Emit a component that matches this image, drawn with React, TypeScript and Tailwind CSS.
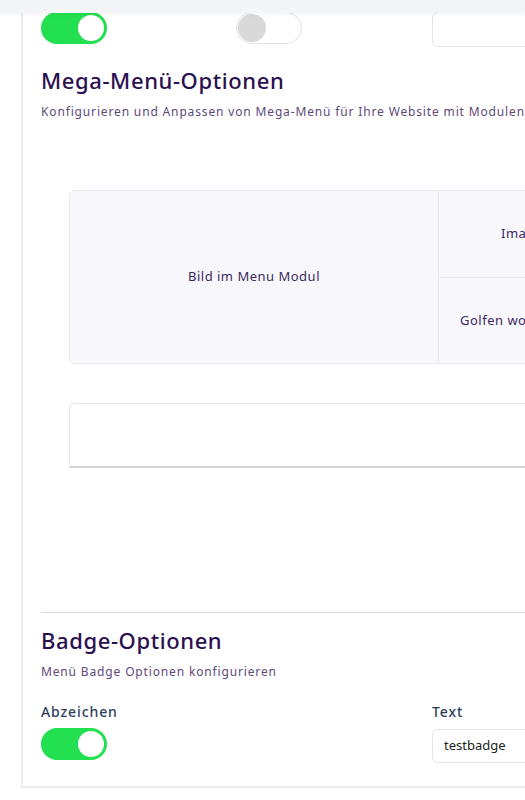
import React from 'react';

const Toggle = ({ on }: { on: boolean }) =>
  on ? (
    <div className="w-[66px] h-[32px] rounded-full bg-[#22e04f] flex items-center justify-end pr-[3px]">
      <div className="w-[26px] h-[26px] rounded-full bg-white" />
    </div>
  ) : (
    <div className="w-[66px] h-[32px] rounded-full bg-white border border-[#e2e2e2] flex items-center pl-[1px]">
      <div className="w-[28px] h-[28px] rounded-full bg-[#d9d9d9]" />
    </div>
  );

const SectionHead = ({ title, sub }: { title: string; sub: string }) => (
  <div>
    <h2 className="text-[22px] leading-[30px] font-medium text-[#2a1050] tracking-[0.6px]">{title}</h2>
    <p className="mt-[8px] text-[12px] leading-[18px] text-[#5c4a7c] tracking-[0.85px] whitespace-nowrap">{sub}</p>
  </div>
);

export default function App() {
  return (
    <div className="relative h-[800px] w-[525px] overflow-hidden bg-white" style={{ fontFamily: '"Noto Sans", Lato, sans-serif' }}>
      <div className="absolute top-0 left-0 right-0 h-[13px] bg-[#f3f5f9] shadow-[0_2px_4px_rgba(0,0,0,0.04)] z-10" />

      <div className="ml-[21px] w-[720px] border-l-2 border-b-2 border-[#ececee] pl-[18px] pr-4 pb-[23px]">
        <div className="grid grid-cols-[195px_196px_1fr] pt-[12px]">
          <Toggle on />
          <Toggle on={false} />
          <div className="h-[35px] rounded-md border border-[#e4e4e4] bg-white" />
        </div>

        <div className="mt-[18px]">
          <SectionHead
            title="Mega-Menü-Optionen"
            sub="Konfigurieren und Anpassen von Mega-Menü für Ihre Website mit Modulen"
          />
        </div>

        <div className="ml-[28px] mt-[69px] h-[174px] flex rounded-md border border-[#e8e8ef] bg-[#f8f8fc] text-[13px] text-[#3b2862] tracking-[0.5px]">
          <div className="w-[369px] flex items-center justify-center border-r border-[#e8e8ef]">Bild im Menu Modul</div>
          <div className="flex-1 flex flex-col">
            <div className="flex-1 flex items-center pl-[62px] border-b border-[#e8e8ef] whitespace-nowrap">Image Modul Beispiel</div>
            <div className="flex-1 flex items-center pl-[21px] whitespace-nowrap">Golfen wochenende angebote</div>
          </div>
        </div>

        <div className="ml-[28px] mt-[39px] h-[65px] rounded-tl-md border border-[#e6e6e6] border-b-2 border-b-[#d6d6da] bg-white" />

        <div className="mt-[144px] h-px bg-[#ddd8e5]" />

        <div className="mt-[12px]">
          <SectionHead title="Badge-Optionen" sub="Menü Badge Optionen konfigurieren" />
        </div>

        <div className="mt-[21px] grid grid-cols-[391px_1fr]">
          <div>
            <div className="text-[14px] leading-[20px] font-medium text-[#2c3e5c] tracking-[0.9px]">Abzeichen</div>
            <div className="mt-[6px]">
              <Toggle on />
            </div>
          </div>
          <div>
            <div className="text-[14px] leading-[20px] font-medium text-[#2c3e5c] tracking-[0.9px]">Text</div>
            <div className="mt-[7px] h-[34px] rounded-md border border-[#e4e4e4] bg-white flex items-center pl-[11px] text-[13px] text-[#222]">
              testbadge
            </div>
          </div>
        </div>
      </div>
    </div>
  );
}
